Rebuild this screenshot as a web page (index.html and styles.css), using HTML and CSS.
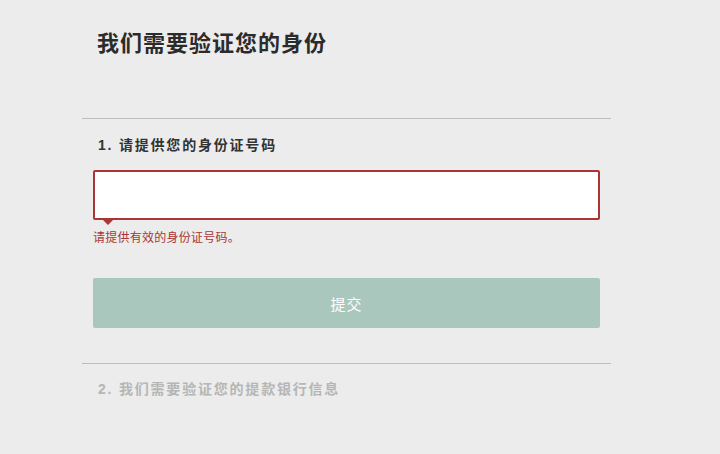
FILE: index.html
```html
<!DOCTYPE html>
<html lang="zh-CN">
<head>
<meta charset="utf-8">
<title>验证身份</title>
<link rel="stylesheet" href="styles.css">
</head>
<body>
<div class="page">
  <h1 class="title">我们需要验证您的身份</h1>
  <section class="step">
    <h2 class="step-title">1. 请提供您的身份证号码</h2>
    <div class="field">
      <input class="id-input" type="text" aria-label="身份证号码">
      <span class="arrow"></span>
    </div>
    <p class="error">请提供有效的身份证号码。</p>
    <button class="submit" type="button">提交</button>
  </section>
  <section class="step step-disabled">
    <h2 class="step-title">2. 我们需要验证您的提款银行信息</h2>
  </section>
</div>
</body>
</html>
```
FILE: styles.css
```css
html, body {
  margin: 0;
  padding: 0;
  background: #ebeceb;
  height: 100%;
}
body {
  font-family: "Liberation Sans", "Noto Sans CJK SC", sans-serif;
  color: #333;
}
.page {
  width: 529px;
  margin-left: 82px;
  padding-top: 29px;
}
.title {
  margin: 0;
  padding-left: 15px;
  font-size: 22px;
  letter-spacing: 1px;
  line-height: 30px;
  font-weight: bold;
  color: #2b2b2b;
}
.step {
  margin-top: 59px;
  border-top: 1px solid #bcbdbc;
  padding: 16px 11px 35px;
}
.step + .step {
  margin-top: 0;
  padding-top: 15px;
}
.step-title {
  margin: 0;
  padding-left: 5px;
  font-size: 14px;
  letter-spacing: 1.8px;
  line-height: 20px;
  font-weight: bold;
  color: #333;
}
.step-disabled .step-title {
  color: #b5b6b5;
}
.field {
  position: relative;
  margin-top: 15px;
}
.id-input {
  display: block;
  box-sizing: border-box;
  width: 100%;
  height: 50px;
  margin: 0;
  border: 2px solid #a93535;
  border-radius: 2px;
  background: #fff;
  outline: none;
}
.arrow {
  position: absolute;
  left: 10px;
  top: 50px;
  width: 0;
  height: 0;
  border-left: 5px solid transparent;
  border-right: 5px solid transparent;
  border-top: 5px solid #a93535;
}
.error {
  margin: 10px 0 0;
  font-size: 12px;
  letter-spacing: 0.25px;
  line-height: 16px;
  color: #a93535;
}
.submit {
  display: block;
  box-sizing: border-box;
  width: 100%;
  height: 50px;
  margin-top: 32px;
  border: 0;
  border-radius: 2px;
  background: #aac7be;
  color: #fff;
  font-family: "Liberation Sans", "Noto Sans CJK SC", sans-serif;
  font-size: 15px;
  letter-spacing: 1px;
}
```
